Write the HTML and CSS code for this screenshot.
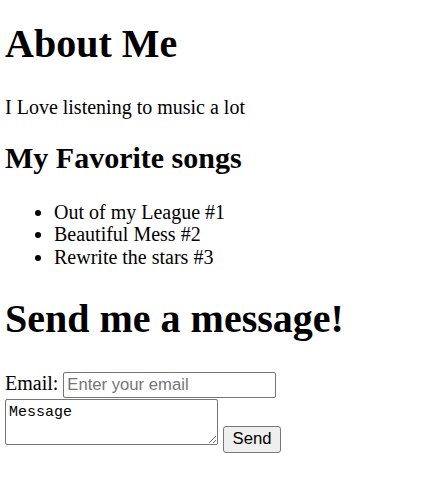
FILE: index.html
```html
<!DOCTYPE html>
<html>
<head>
<meta charset="utf-8">
<title>About Me</title>
<link rel="stylesheet" href="styles.css">
</head>
<body>
<h1 class="title">About Me</h1>
<p class="intro">I Love listening to music a lot</p>
<h2 class="subtitle">My Favorite songs</h2>
<ul class="songs">
<li>Out of my League #1</li>
<li>Beautiful Mess #2</li>
<li>Rewrite the stars #3</li>
</ul>
<h1 class="title title-send">Send me a message!</h1>
<form class="msg-form">
<div class="row row-email">
<label for="email" class="label">Email:</label>
<input id="email" class="email" type="email" placeholder="Enter your email">
</div>
<div class="row row-message">
<textarea class="message">Message</textarea>
<button type="button" class="send">Send</button>
</div>
</form>
</body>
</html>
```
FILE: styles.css
```css
html, body {
  background: #ffffff;
}
body {
  margin: 0 5px;
  font-family: "Liberation Serif", "Times New Roman", serif;
  font-size: 20px;
  line-height: 23px;
  color: #000000;
}
.title {
  font-size: 40px;
  line-height: 46px;
  font-weight: bold;
  margin: 20.5px 0 29.25px;
}
.title-send {
  margin: 0 0 29.2px;
}
.intro {
  margin: 0 0 21.85px;
}
.subtitle {
  font-size: 30px;
  line-height: 34.5px;
  font-weight: bold;
  margin: 0 0 25.65px;
}
.songs {
  margin: 0 0 28.25px;
  padding-left: 49px;
  line-height: 22.5px;
}
.msg-form {
  margin: 0;
}
.row {
  display: flex;
  gap: 5px;
}
.row-email {
  align-items: baseline;
}
.row-message {
  align-items: flex-start;
  margin-top: 1px;
}
.label {
  line-height: 23px;
}
.email {
  box-sizing: border-box;
  width: 213px;
  height: 26px;
  margin: 0;
  padding: 0 3px;
  border: 1px solid #767676;
  border-radius: 2px;
  font-family: "Liberation Sans", Arial, sans-serif;
  font-size: 16.67px;
  color: #000000;
  background: #ffffff;
}
.email::placeholder {
  color: #757575;
}
.message {
  box-sizing: border-box;
  width: 213px;
  height: 46px;
  margin: 0;
  padding: 4px 3px;
  border: 1px solid #767676;
  border-radius: 2px;
  font-family: "Liberation Mono", "Courier New", monospace;
  font-size: 15px;
  color: #000000;
  background: #ffffff;
}
.send {
  box-sizing: border-box;
  width: 58px;
  height: 27px;
  margin: 27px 0 0;
  padding: 0;
  border: 1px solid #767676;
  border-radius: 3px;
  background: #efefef;
  font-family: "Liberation Sans", Arial, sans-serif;
  font-size: 16.67px;
  color: #000000;
}
```
